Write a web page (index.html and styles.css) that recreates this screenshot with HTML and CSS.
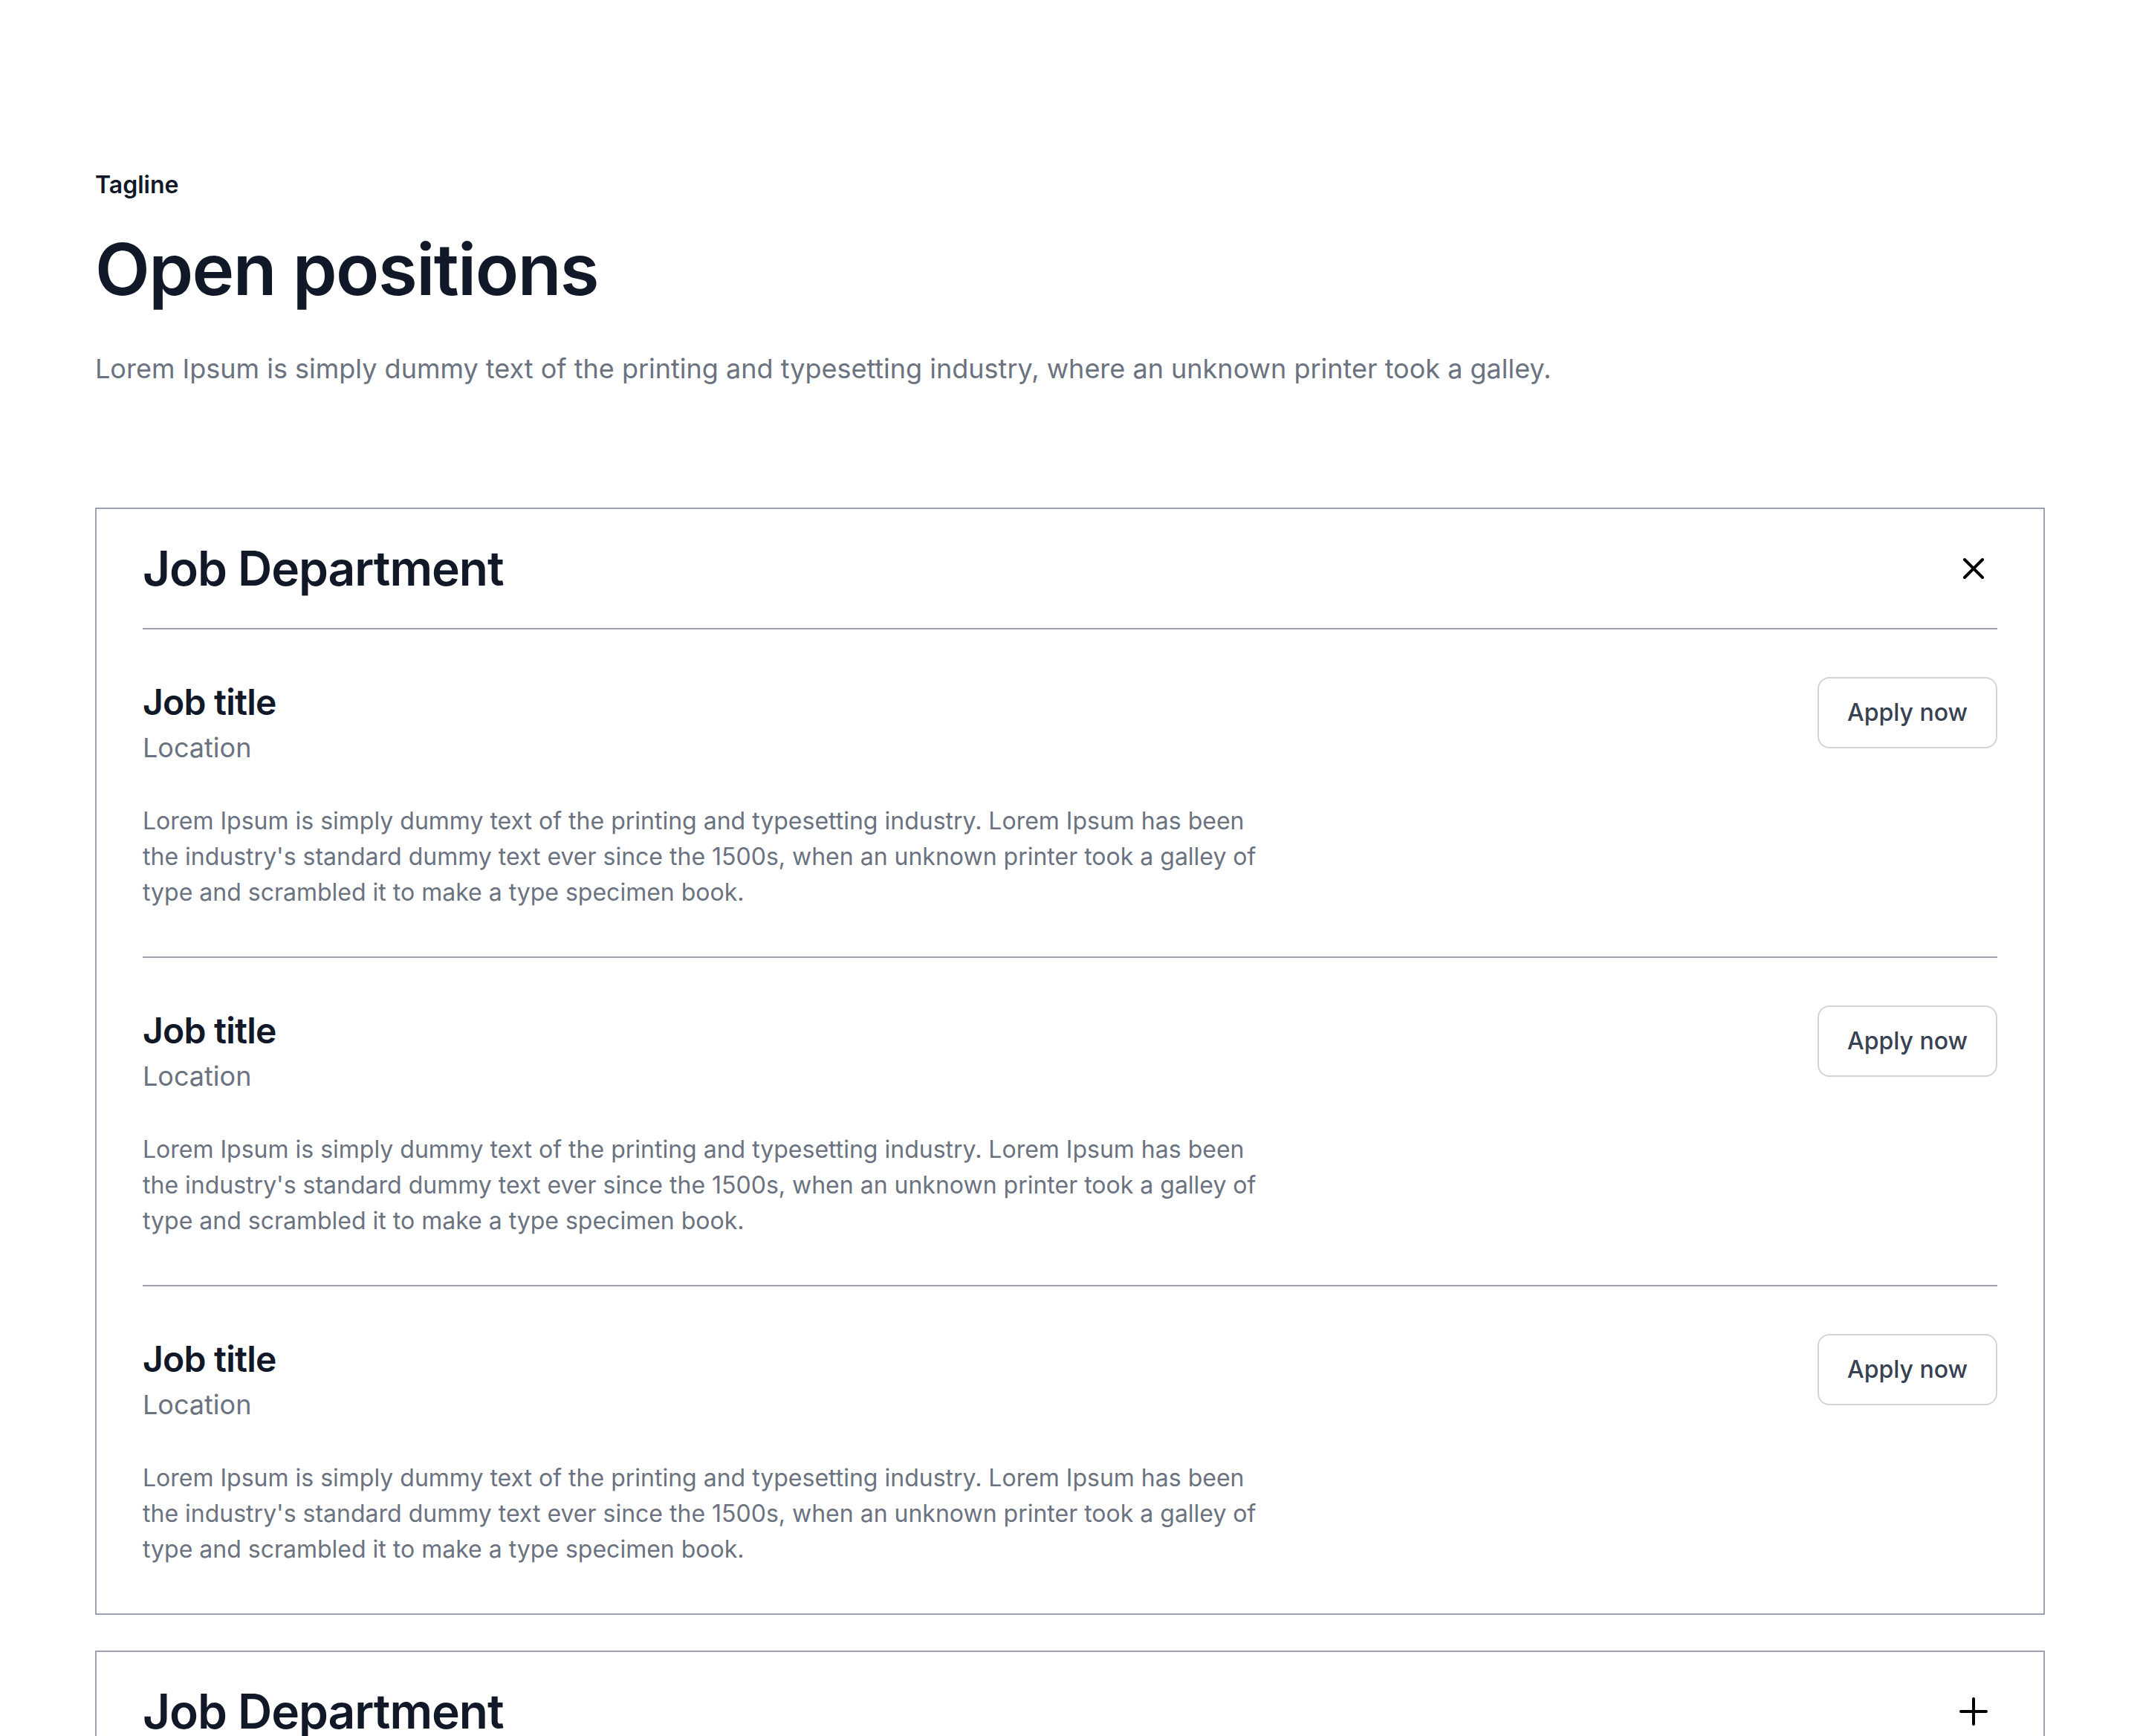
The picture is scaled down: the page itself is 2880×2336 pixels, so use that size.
FILE: index.html
```html
<!DOCTYPE html>
<html lang="en">
  <head>
    <meta charset="UTF-8" />
    <meta name="viewport" content="width=device-width, initial-scale=1.0" />
    <title>Open positions</title>
    <link rel="stylesheet" href="styles.css">
  </head>
  <body>
    <main class="careers">
      <header class="careers-intro">
        <p class="tagline">Tagline</p>
        <h1>Open positions</h1>
        <p class="lead">Lorem Ipsum is simply dummy text of the printing and typesetting industry, where an unknown printer took a galley.</p>
      </header>

      <section class="department is-open">
        <div class="department-header">
          <h2>Job Department</h2>
          <button class="toggle" type="button" aria-label="Close">
            <svg width="64" height="64" viewBox="0 0 64 64" fill="none" stroke="#000" stroke-width="4" stroke-linecap="round">
              <path d="M20 20 44 44M44 20 20 44" />
            </svg>
          </button>
        </div>

        <div class="job-list">
          <article class="job">
            <div class="job-top">
              <div>
                <h3>Job title</h3>
                <p class="location">Location</p>
              </div>
              <a class="apply-btn" href="#">Apply now</a>
            </div>
            <p class="job-desc">Lorem Ipsum is simply dummy text of the printing and typesetting industry. Lorem Ipsum has been the industry's standard dummy text ever since the 1500s, when an unknown printer took a galley of type and scrambled it to make a type specimen book.</p>
          </article>

          <article class="job">
            <div class="job-top">
              <div>
                <h3>Job title</h3>
                <p class="location">Location</p>
              </div>
              <a class="apply-btn" href="#">Apply now</a>
            </div>
            <p class="job-desc">Lorem Ipsum is simply dummy text of the printing and typesetting industry. Lorem Ipsum has been the industry's standard dummy text ever since the 1500s, when an unknown printer took a galley of type and scrambled it to make a type specimen book.</p>
          </article>

          <article class="job">
            <div class="job-top">
              <div>
                <h3>Job title</h3>
                <p class="location">Location</p>
              </div>
              <a class="apply-btn" href="#">Apply now</a>
            </div>
            <p class="job-desc">Lorem Ipsum is simply dummy text of the printing and typesetting industry. Lorem Ipsum has been the industry's standard dummy text ever since the 1500s, when an unknown printer took a galley of type and scrambled it to make a type specimen book.</p>
          </article>
        </div>
      </section>

      <section class="department">
        <div class="department-header">
          <h2>Job Department</h2>
          <button class="toggle" type="button" aria-label="Open">
            <svg width="64" height="64" viewBox="0 0 64 64" fill="none" stroke="#000" stroke-width="4" stroke-linecap="round">
              <path d="M32 15v34M15 32h34" />
            </svg>
          </button>
        </div>
      </section>
    </main>
  </body>
</html>
```

FILE: styles.css
```css
/* Global */
body {
  margin: 0;
  font-family: "Inter", "Noto Sans", sans-serif;
  background-color: #ffffff;
  color: #111827;
}

p,
h1,
h2,
h3 {
  margin: 0;
}

.careers {
  padding: 225px 128px 0;
}

/* Intro */
.careers-intro {
  margin-bottom: 159px;
}

.tagline {
  font-size: 32px;
  line-height: 48px;
  font-weight: 600;
}

.careers-intro h1 {
  margin-top: 32px;
  font-size: 96px;
  line-height: 1.2;
  font-weight: 600;
  letter-spacing: -0.016em;
}

.lead {
  margin-top: 48px;
  font-size: 36px;
  line-height: 56px;
  color: #6b7280;
}

/* Department accordion */
.department {
  border: 2px solid #9ca3af;
  padding: 0 62px;
}

.department + .department {
  margin-top: 48px;
}

.department-header {
  display: flex;
  align-items: center;
  justify-content: space-between;
  padding: 32px 0;
}

.department.is-open .department-header {
  border-bottom: 2px solid #9ca3af;
}

.department-header h2 {
  font-size: 64px;
  line-height: 96px;
  font-weight: 600;
  letter-spacing: -0.016em;
}

.toggle {
  width: 64px;
  height: 64px;
  padding: 0;
  border: none;
  background: none;
  cursor: pointer;
  display: flex;
}

/* Jobs */
.job {
  padding: 64px 0 62px;
}

.job + .job {
  border-top: 2px solid #9ca3af;
}

.job-top {
  display: flex;
  align-items: flex-start;
  justify-content: space-between;
}

.job h3 {
  font-size: 48px;
  line-height: 68px;
  font-weight: 600;
  letter-spacing: -0.016em;
}

.location {
  font-size: 36px;
  line-height: 54px;
  color: #6b7280;
}

.apply-btn {
  padding: 22px 38px;
  font-size: 32px;
  line-height: 48px;
  font-weight: 500;
  color: #374151;
  text-decoration: none;
  border: 2px solid #d1d5db;
  border-radius: 16px;
}

.job-desc {
  margin-top: 48px;
  max-width: 1536px;
  font-size: 32px;
  line-height: 48px;
  color: #6b7280;
}
```
